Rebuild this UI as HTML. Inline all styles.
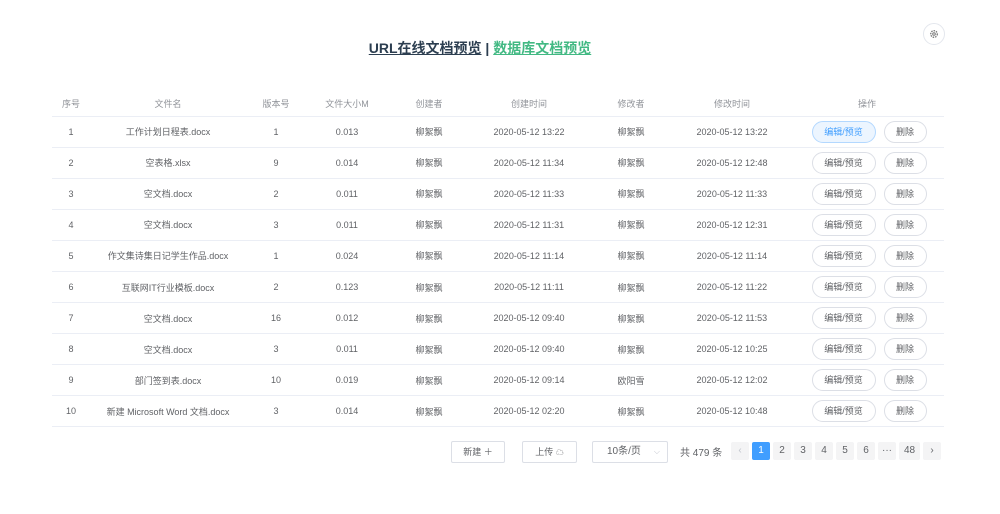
<!DOCTYPE html>
<html><head><meta charset="utf-8"><style>
*{margin:0;padding:0;box-sizing:border-box}
body{width:1000px;height:514px;background:#fff;font-family:"Liberation Sans","Noto Sans CJK SC",sans-serif;color:#606266;font-size:9px;position:relative;overflow:hidden}
.title{position:absolute;top:38px;left:-20px;width:1000px;text-align:center;font-size:14px;font-weight:bold}
.title a{color:#2c3e50;text-decoration:underline}
.title a.g{color:#42b983}
.gear{position:absolute;left:923px;top:23px;width:22px;height:22px;border:1px solid #e4e7ed;border-radius:50%;display:flex;align-items:center;justify-content:center}
table{position:absolute;left:52px;top:91px;width:892px;border-collapse:collapse}
td,th{text-align:center;font-weight:normal;height:31.1px;border-bottom:1px solid #ebeef5;white-space:nowrap}
td:last-child{padding-left:4px}
th{height:25px;color:#909399}
.b{display:inline-block;height:22px;line-height:20px;border:1px solid #dcdfe6;border-radius:11px;padding:0 12px;color:#606266;background:#fff}
.b.e{width:64px;padding:0}.b.d{width:43px;padding:0;margin-left:8px}
.b.on{background:#ecf5ff;border-color:#b3d8ff;color:#409eff}
.f{position:absolute;top:441px;height:22px;border:1px solid #dcdfe6;border-radius:2px;line-height:20px;text-align:center;color:#606266}
.p{position:absolute;top:442px;width:18px;height:18px;background:#f4f4f5;border-radius:2px;text-align:center;line-height:18px;font-size:10px;color:#606266}
</style></head><body>
<div class="title"><a>URL在线文档预览</a> <span style="color:#2c3e50">|</span> <a class="g">数据库文档预览</a></div>
<div class="gear"><svg width="10" height="10" viewBox="0 0 10 10"><circle cx="5" cy="5" r="3.3" fill="none" stroke="#777" stroke-width="1.3" stroke-dasharray="1.5 1"/><circle cx="5" cy="5" r="1.3" fill="none" stroke="#777"/></svg></div>
<table>
<colgroup><col style="width:38px"><col style="width:156px"><col style="width:60px"><col style="width:82px"><col style="width:82px"><col style="width:118px"><col style="width:86px"><col style="width:116px"><col></colgroup>
<tr><th>序号</th><th>文件名</th><th>版本号</th><th>文件大小M</th><th>创建者</th><th>创建时间</th><th>修改者</th><th>修改时间</th><th>操作</th></tr>
<tr><td>1</td><td>工作计划日程表.docx</td><td>1</td><td>0.013</td><td>柳絮飘</td><td>2020-05-12 13:22</td><td>柳絮飘</td><td>2020-05-12 13:22</td><td><span class="b e on">编辑/预览</span><span class="b d">删除</span></td></tr>
<tr><td>2</td><td>空表格.xlsx</td><td>9</td><td>0.014</td><td>柳絮飘</td><td>2020-05-12 11:34</td><td>柳絮飘</td><td>2020-05-12 12:48</td><td><span class="b e">编辑/预览</span><span class="b d">删除</span></td></tr>
<tr><td>3</td><td>空文档.docx</td><td>2</td><td>0.011</td><td>柳絮飘</td><td>2020-05-12 11:33</td><td>柳絮飘</td><td>2020-05-12 11:33</td><td><span class="b e">编辑/预览</span><span class="b d">删除</span></td></tr>
<tr><td>4</td><td>空文档.docx</td><td>3</td><td>0.011</td><td>柳絮飘</td><td>2020-05-12 11:31</td><td>柳絮飘</td><td>2020-05-12 12:31</td><td><span class="b e">编辑/预览</span><span class="b d">删除</span></td></tr>
<tr><td>5</td><td>作文集诗集日记学生作品.docx</td><td>1</td><td>0.024</td><td>柳絮飘</td><td>2020-05-12 11:14</td><td>柳絮飘</td><td>2020-05-12 11:14</td><td><span class="b e">编辑/预览</span><span class="b d">删除</span></td></tr>
<tr><td>6</td><td>互联网IT行业模板.docx</td><td>2</td><td>0.123</td><td>柳絮飘</td><td>2020-05-12 11:11</td><td>柳絮飘</td><td>2020-05-12 11:22</td><td><span class="b e">编辑/预览</span><span class="b d">删除</span></td></tr>
<tr><td>7</td><td>空文档.docx</td><td>16</td><td>0.012</td><td>柳絮飘</td><td>2020-05-12 09:40</td><td>柳絮飘</td><td>2020-05-12 11:53</td><td><span class="b e">编辑/预览</span><span class="b d">删除</span></td></tr>
<tr><td>8</td><td>空文档.docx</td><td>3</td><td>0.011</td><td>柳絮飘</td><td>2020-05-12 09:40</td><td>柳絮飘</td><td>2020-05-12 10:25</td><td><span class="b e">编辑/预览</span><span class="b d">删除</span></td></tr>
<tr><td>9</td><td>部门签到表.docx</td><td>10</td><td>0.019</td><td>柳絮飘</td><td>2020-05-12 09:14</td><td>欧阳雪</td><td>2020-05-12 12:02</td><td><span class="b e">编辑/预览</span><span class="b d">删除</span></td></tr>
<tr><td>10</td><td>新建 Microsoft Word 文档.docx</td><td>3</td><td>0.014</td><td>柳絮飘</td><td>2020-05-12 02:20</td><td>柳絮飘</td><td>2020-05-12 10:48</td><td><span class="b e">编辑/预览</span><span class="b d">删除</span></td></tr>
</table>
<div class="f" style="left:451px;width:54px">新建 ＋</div>
<div class="f" style="left:522px;width:55px">上传 <span style="font-size:8px">☁</span></div>
<div class="f" style="left:592px;width:76px;font-size:10px;text-align:left;padding-left:14px">10条/页<span style="position:absolute;right:7px;color:#c0c4cc;font-size:8px">⌵</span></div>
<div style="position:absolute;left:680px;top:444px;font-size:10px">共 479 条</div>
<div class="p" style="left:731px;color:#c0c4cc">‹</div>
<div class="p" style="left:752px;background:#409eff;color:#fff">1</div>
<div class="p" style="left:773px">2</div>
<div class="p" style="left:794px">3</div>
<div class="p" style="left:815px">4</div>
<div class="p" style="left:836px">5</div>
<div class="p" style="left:857px">6</div>
<div class="p" style="left:878px">···</div>
<div class="p" style="left:899px;width:21px">48</div>
<div class="p" style="left:923px">›</div>
</body></html>
